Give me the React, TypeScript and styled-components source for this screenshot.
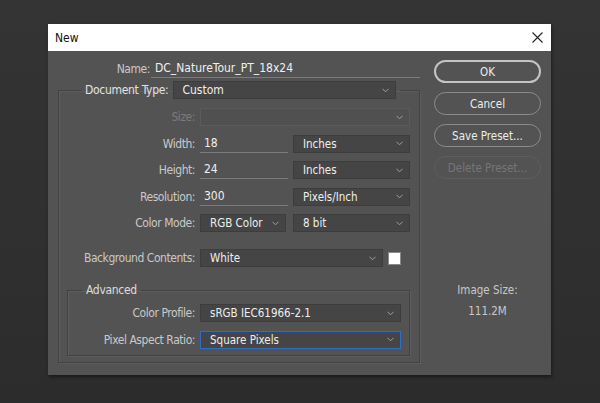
import React from 'react';
import styled, { createGlobalStyle } from 'styled-components';

const GlobalStyle = createGlobalStyle`
  html, body {
    margin: 0;
    padding: 0;
    background: #323232;
    font-family: "DejaVu Sans Condensed", "Liberation Sans", sans-serif;
    font-size: 11.5px;
  }
`;

const Page = styled.div`
  width: 600px;
  height: 403px;
  padding: 24px 0 0 48px;
  box-sizing: border-box;
  background: linear-gradient(#343434, #2c2c2c);
`;

const Dialog = styled.div`
  width: 503px;
  height: 351px;
  background: #535353;
  box-shadow: 1px 2px 3px rgba(0, 0, 0, 0.45);
  display: flex;
  flex-direction: column;
`;

const TitleBar = styled.div`
  height: 27px;
  background: #ffffff;
  display: flex;
  align-items: center;
  justify-content: space-between;
  padding: 0 8px 0 7px;
  color: #111;
  font-size: 12px;
`;

const Body = styled.div`
  display: flex;
  gap: 14px;
  padding: 9px 10px 0 0;
`;

const LeftCol = styled.div`
  width: 372px;
  display: flex;
  flex-direction: column;
`;

const RightCol = styled.div`
  width: 107px;
  display: flex;
  flex-direction: column;
  gap: 9px;
  align-items: stretch;
`;

const Row = styled.div<{ $mt?: number }>`
  display: flex;
  align-items: center;
  height: 18px;
  margin-top: ${(p) => p.$mt ?? 0}px;
`;

const Label = styled.span<{ $w: number; $disabled?: boolean }>`
  width: ${(p) => p.$w}px;
  text-align: right;
  color: ${(p) => (p.$disabled ? '#7b7b7b' : '#c9c9c9')};
  font-size: 12px;
  letter-spacing: -0.45px;
  margin-right: 5px;
  white-space: nowrap;
  flex-shrink: 0;
`;

const TextInput = styled.div<{ $w: number }>`
  width: ${(p) => p.$w}px;
  height: 18px;
  box-sizing: border-box;
  border-bottom: 1px solid #7c7c7c;
  color: #efefef;
  font-size: 12px;
  padding: 0 0 0 4px;
  line-height: 16px;
  white-space: nowrap;
`;

const SelectBox = styled.div<{ $w: number; $disabled?: boolean; $focus?: boolean; $pad?: number }>`
  width: ${(p) => p.$w}px;
  height: 18px;
  box-sizing: border-box;
  display: flex;
  align-items: center;
  justify-content: space-between;
  padding: 0 6px 0 ${(p) => p.$pad ?? 9}px;
  background: ${(p) => (p.$disabled ? '#505050' : '#454545')};
  border: 1px solid
    ${(p) => (p.$focus ? '#2f6ec4' : p.$disabled ? '#5b5b5b' : '#3d3d3d')};
  box-shadow: ${(p) => (p.$focus ? 'inset 0 0 0 1px #24497a' : 'none')};
  color: #eeeeee;
  white-space: nowrap;
  flex-shrink: 0;
`;

const Gap = styled.span<{ $w: number }>`
  width: ${(p) => p.$w}px;
  flex-shrink: 0;
`;

const Swatch = styled.div`
  width: 13px;
  height: 13px;
  margin-left: 5px;
  background: #ffffff;
  box-sizing: border-box;
  border: 1px solid #8a8a8a;
`;

const Group = styled.fieldset<{ $ml: number; $w: number; $mt: number; $pb: number }>`
  margin: ${(p) => p.$mt}px 0 0 ${(p) => p.$ml}px;
  width: ${(p) => p.$w}px;
  box-sizing: border-box;
  padding: 0 0 ${(p) => p.$pb}px 0;
  border: 1px solid #424242;
  box-shadow: 1px 1px 0 #5d5d5d, inset 1px 1px 0 #5d5d5d;
  min-width: 0;
`;

const Legend = styled.legend<{ $ml: number }>`
  margin-left: ${(p) => p.$ml}px;
  padding: 0 4px;
  display: flex;
  align-items: center;
  height: 18px;
  color: #dcdcdc;
  font-size: 12px;
  letter-spacing: -0.3px;
`;

const LegendText = styled.span`
  color: #e2e2e2;
  margin-right: 5px;
`;

const GroupBody = styled.div<{ $pt: number }>`
  padding-top: ${(p) => p.$pt}px;
`;

const Pill = styled.div<{ $variant?: 'primary' | 'disabled' }>`
  height: 23px;
  box-sizing: border-box;
  border-radius: 12px;
  display: flex;
  align-items: center;
  justify-content: center;
  border: ${(p) =>
    p.$variant === 'primary'
      ? '2px solid #c4c4c4'
      : p.$variant === 'disabled'
      ? '1px solid #5e5e5e'
      : '1px solid #8c8c8c'};
  color: ${(p) => (p.$variant === 'disabled' ? '#767676' : '#ececec')};
`;

const SizeInfo = styled.div`
  margin-top: 92px;
  text-align: center;
  color: #c8c8c8;
  line-height: 21px;
`;

const Chevron = () => (
  <svg width="7" height="5" viewBox="0 0 7 5">
    <polyline points="0.5,0.8 3.5,3.8 6.5,0.8" fill="none" stroke="#a0a0a0" strokeWidth="1" />
  </svg>
);

const Select: React.FC<{ w: number; value?: string; disabled?: boolean; focus?: boolean; pad?: number }> = ({
  w,
  value,
  disabled,
  focus,
  pad,
}) => (
  <SelectBox $w={w} $disabled={disabled} $focus={focus} $pad={pad}>
    <span style={{ letterSpacing: 0 }}>{value}</span>
    <Chevron />
  </SelectBox>
);

const CloseIcon = () => (
  <svg width="11" height="11" viewBox="0 0 11 11">
    <path d="M0.5 0.5 L10.5 10.5 M10.5 0.5 L0.5 10.5" stroke="#222" strokeWidth="1.1" />
  </svg>
);

export default function App() {
  return (
    <>
      <GlobalStyle />
      <Page>
        <Dialog>
          <TitleBar>
            <span>New</span>
            <CloseIcon />
          </TitleBar>
          <Body>
            <LeftCol>
              <Row>
                <Label $w={102} style={{ marginRight: 1 }}>
                  Name:
                </Label>
                <TextInput $w={269}>DC_NatureTour_PT_18x24</TextInput>
              </Row>
              <Group $ml={10} $w={362} $mt={3} $pb={6}>
                <Legend $ml={22}>
                  <LegendText>Document Type:</LegendText>
                  <Select w={223} value="Custom" pad={8} />
                </Legend>
                <GroupBody $pt={9}>
                  <Row>
                    <Label $w={136} $disabled>
                      Size:
                    </Label>
                    <Select w={210} disabled />
                  </Row>
                  <Row $mt={8.5}>
                    <Label $w={136}>Width:</Label>
                    <TextInput $w={88}>18</TextInput>
                    <Gap $w={5} />
                    <Select w={117} value="Inches" />
                  </Row>
                  <Row $mt={8.5}>
                    <Label $w={136}>Height:</Label>
                    <TextInput $w={88}>24</TextInput>
                    <Gap $w={5} />
                    <Select w={117} value="Inches" />
                  </Row>
                  <Row $mt={8.5}>
                    <Label $w={136}>Resolution:</Label>
                    <TextInput $w={88}>300</TextInput>
                    <Gap $w={5} />
                    <Select w={117} value="Pixels/Inch" />
                  </Row>
                  <Row $mt={8.5}>
                    <Label $w={136}>Color Mode:</Label>
                    <Select w={86} value="RGB Color" />
                    <Gap $w={7} />
                    <Select w={117} value="8 bit" />
                  </Row>
                  <Row $mt={17}>
                    <Label $w={136}>Background Contents:</Label>
                    <Select w={183} value="White" />
                    <Swatch />
                  </Row>
                  <Group $ml={8} $w={343} $mt={15} $pb={6}>
                    <Legend $ml={14} style={{ height: 16 }}>
                      Advanced
                    </Legend>
                    <GroupBody $pt={6}>
                      <Row>
                        <Label $w={127}>Color Profile:</Label>
                        <Select w={201} value="sRGB IEC61966-2.1" />
                      </Row>
                      <Row $mt={8} style={{ height: 19 }}>
                        <Label $w={127}>Pixel Aspect Ratio:</Label>
                        <Select w={201} value="Square Pixels" focus />
                      </Row>
                    </GroupBody>
                  </Group>
                </GroupBody>
              </Group>
            </LeftCol>
            <RightCol>
              <Pill $variant="primary">OK</Pill>
              <Pill>Cancel</Pill>
              <Pill>Save Preset...</Pill>
              <Pill $variant="disabled">Delete Preset...</Pill>
              <SizeInfo>
                Image Size:
                <br />
                111.2M
              </SizeInfo>
            </RightCol>
          </Body>
        </Dialog>
      </Page>
    </>
  );
}
